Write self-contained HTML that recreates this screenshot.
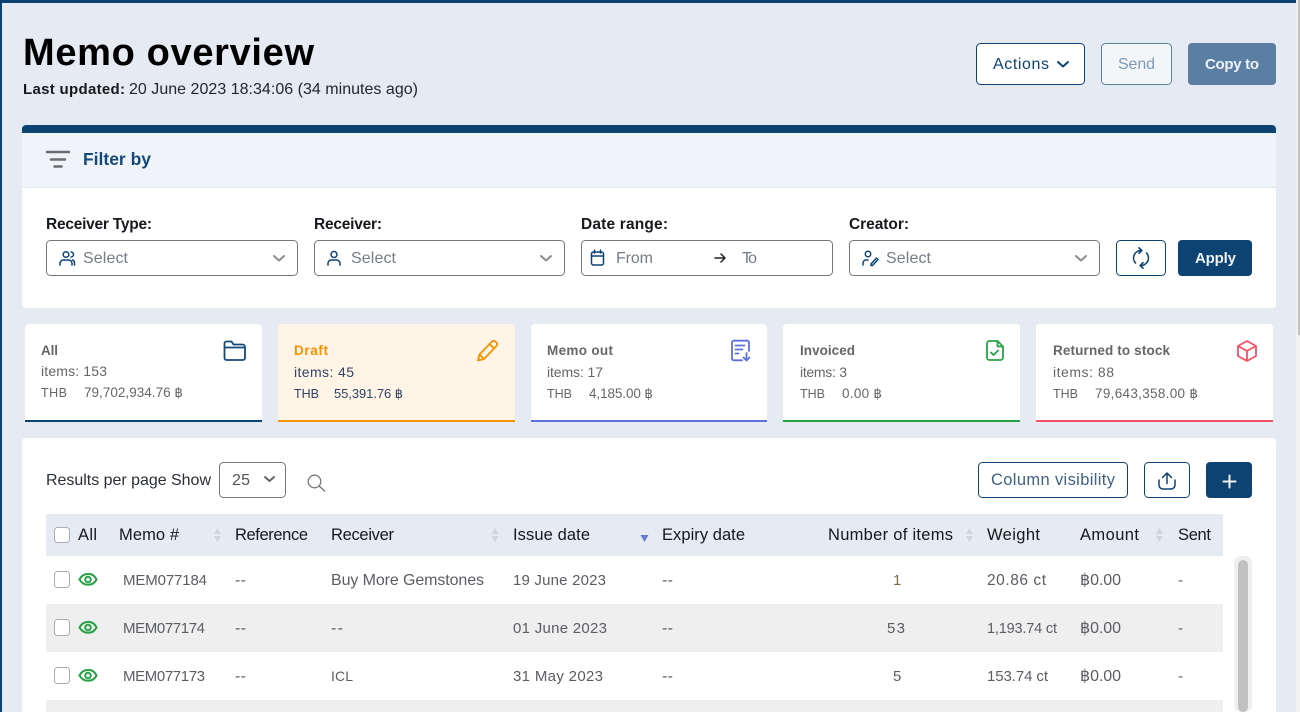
<!DOCTYPE html>
<html lang="en"><head><meta charset="utf-8"><title>Memo overview</title>
<style>
html,body{margin:0;padding:0;width:1300px;height:712px;overflow:hidden;background:#e6ebf3}
svg{display:block}
text{font-family:"Liberation Sans","DejaVu Sans",sans-serif;font-size:16px;fill:#555}
.b{font-weight:700}
.lab{font-size:15.5px;fill:#16191d;font-weight:700}
.sel{font-size:16px;fill:#757c86}
.ct{font-size:13.5px;font-weight:700;fill:#666}
.cs{font-size:14px;fill:#666}
.cv{font-size:13.5px;fill:#666}
.cu{font-size:12.5px;fill:#666}
.cd{font-size:14px;fill:#2f4468}
.h{font-size:16.5px;fill:#15181c}
.r{font-size:15px;fill:#5a5d62}
.r2{font-size:16px;fill:#5a5d62}
.sq{fill:#fff;stroke:#a9adb3;stroke-width:1}
.ic{fill:none;stroke:#0d4373;stroke-width:1.5;stroke-linecap:round;stroke-linejoin:round}
</style></head><body>
<svg width="1300" height="712" viewBox="0 0 1300 712" xmlns="http://www.w3.org/2000/svg">
<rect width="1300" height="712" fill="#e6ebf3"/>
<rect width="1296" height="3" fill="#0d4373"/>
<rect y="0" width="2" height="712" fill="#0d4373"/>
<rect x="1296" width="4" height="712" fill="#f1f1f1"/>
<rect x="1298" width="2" height="335" fill="#c1c1c1"/>

<!-- header -->
<text x="23" y="65" class="b" style="font-size:38px;fill:#000" textLength="291" lengthAdjust="spacing">Memo overview</text>
<text x="23" y="94" class="b" style="font-size:15px;fill:#16191d" textLength="102" lengthAdjust="spacing">Last updated:</text>
<text x="129" y="94" style="font-size:16px;fill:#22262b" textLength="289" lengthAdjust="spacing">20 June 2023 18:34:06 (34 minutes ago)</text>

<rect x="976.5" y="43.5" width="108" height="41" rx="4" fill="#fff" stroke="#0d4373"/>
<text x="993" y="69" style="fill:#0d4373" textLength="56" lengthAdjust="spacing">Actions</text>
<path d="M1058 62l5 4.500 5-4.500" fill="none" stroke="#0d4373" stroke-width="2" stroke-linecap="round" stroke-linejoin="round"/>
<rect x="1101.500" y="43.500" width="70" height="41" rx="4" fill="#f3f6f9" stroke="#5d80a3"/>
<text x="1118" y="69" style="fill:#7f9ab5" textLength="37" lengthAdjust="spacing">Send</text>
<rect x="1188" y="43" width="88" height="42" rx="4" fill="#5b7fa3"/>
<text x="1205" y="69" class="b" style="font-size:15px;fill:#eef2f6" textLength="54" lengthAdjust="spacing">Copy to</text>

<!-- filter panel -->
<rect x="22" y="125" width="1254" height="183" rx="4" fill="#fff"/>
<path d="M22 133v-4a4 4 0 0 1 4-4h1246a4 4 0 0 1 4 4v4z" fill="#0d4373"/>
<rect x="22" y="133" width="1254" height="54" fill="#f0f4f9"/>
<rect x="22" y="187" width="1254" height="1" fill="#e4e9f0"/>
<path d="M47 152h22M51 159.500h14M54.500 166.500h7" stroke="#6a6c6f" stroke-width="2.500" fill="none" stroke-linecap="round"/>
<text x="83" y="165" class="b" style="font-size:17.5px;fill:#15497a" textLength="68" lengthAdjust="spacing">Filter by</text>

<text x="46" y="229" class="lab" textLength="106" lengthAdjust="spacing">Receiver Type:</text>
<text x="314" y="229" class="lab" textLength="68" lengthAdjust="spacing">Receiver:</text>
<text x="581" y="229" class="lab" textLength="87" lengthAdjust="spacing">Date range:</text>
<text x="849" y="229" class="lab" textLength="60" lengthAdjust="spacing">Creator:</text>

<g fill="#fff" stroke="#777">
<rect x="46.500" y="240.500" width="251" height="35" rx="4"/>
<rect x="314.500" y="240.500" width="250" height="35" rx="4"/>
<rect x="581.500" y="240.500" width="251" height="35" rx="4"/>
<rect x="849.500" y="240.500" width="250" height="35" rx="4"/>
</g>
<text x="83" y="263" class="sel" textLength="45" lengthAdjust="spacing">Select</text>
<text x="351" y="263" class="sel" textLength="45" lengthAdjust="spacing">Select</text>
<text x="616" y="263" class="sel" textLength="37" lengthAdjust="spacing">From</text>
<text x="742" y="263" class="sel" textLength="15" lengthAdjust="spacing">To</text>
<text x="886" y="263" class="sel" textLength="45" lengthAdjust="spacing">Select</text>
<g fill="none" stroke="#8a8d91" stroke-width="2" stroke-linecap="round" stroke-linejoin="round">
<path d="M274 256l5 4.500 5-4.500M541 256l5 4.500 5-4.500M1076 256l5 4.500 5-4.500"/>
</g>
<!-- users icon -->
<g class="ic"><circle cx="66" cy="254.500" r="2.800"/><path d="M60 265v-1.500a3.500 3.500 0 0 1 3.500-3.500h5a3.500 3.500 0 0 1 3.500 3.500v1.500M71 252a2.500 2.500 0 0 1 0 5M72.500 260a3 3 0 0 1 2 3v2"/></g>
<!-- user icon -->
<g class="ic"><circle cx="334" cy="254.500" r="3"/><path d="M328 265v-1.500a3.500 3.500 0 0 1 3.500-3.500h5a3.500 3.500 0 0 1 3.500 3.500v1.500"/></g>
<!-- calendar -->
<g class="ic"><rect x="591.500" y="252" width="12" height="13" rx="2"/><path d="M591.500 256h12M594.500 250v3M600.500 250v3"/></g>
<path d="M715 258h10M721 254l4 4-4 4" fill="none" stroke="#222" stroke-width="1.500" stroke-linecap="round" stroke-linejoin="round"/>
<!-- creator -->
<g class="ic"><circle cx="868" cy="254" r="2.700"/><path d="M863 265v-2a3 3 0 0 1 3-3h2M871 264l5.500-6 1.500 1.500-5.500 6h-1.500z"/></g>

<rect x="1116.500" y="240.500" width="49" height="35" rx="4" fill="#fff" stroke="#0d4373"/>
<g fill="none" stroke="#0d4373" stroke-width="1.600" stroke-linecap="round" stroke-linejoin="round"><path d="M1141.500 250.500A7.500 7.500 0 0 0 1135.500 263M1139 247.800l2.800 2.700-2.800 2.800M1140.500 265.500A7.500 7.500 0 0 0 1146.500 253M1143 262.700l-2.800 2.800 2.800 2.700"/></g>
<rect x="1178" y="240" width="74" height="36" rx="4" fill="#0d4373"/>
<text x="1195" y="263" class="b" style="fill:#eef2f6;font-size:15px" textLength="41" lengthAdjust="spacing">Apply</text>

<!-- cards -->
<path d="M25 422v-94a4 4 0 0 1 4-4h229a4 4 0 0 1 4 4v94z" fill="#fff"/><rect x="25" y="420" width="237" height="2" fill="#0d4373"/>
<path d="M278 422v-94a4 4 0 0 1 4-4h229a4 4 0 0 1 4 4v94z" fill="#fff4e6"/><rect x="278" y="420" width="237" height="2" fill="#f59300"/>
<path d="M531 422v-94a4 4 0 0 1 4-4h228a4 4 0 0 1 4 4v94z" fill="#fff"/><rect x="531" y="420" width="236" height="2" fill="#5f6fe0"/>
<path d="M783 422v-94a4 4 0 0 1 4-4h229a4 4 0 0 1 4 4v94z" fill="#fff"/><rect x="783" y="420" width="237" height="2" fill="#27a245"/>
<path d="M1036 422v-94a4 4 0 0 1 4-4h229a4 4 0 0 1 4 4v94z" fill="#fff"/><rect x="1036" y="420" width="237" height="2" fill="#fb4f64"/>

<text x="41" y="355" class="ct" textLength="17" lengthAdjust="spacing">All</text>
<text x="41" y="376" class="cs" textLength="66" lengthAdjust="spacing">items: 153</text>
<text x="41" y="397" class="cu" textLength="26" lengthAdjust="spacing">THB</text>
<text x="84" y="397" class="cv" textLength="99" lengthAdjust="spacing">79,702,934.76 ฿</text>

<text x="294" y="355" class="ct" style="fill:#f59300" textLength="34" lengthAdjust="spacing">Draft</text>
<text x="294" y="377" class="cd" textLength="60" lengthAdjust="spacing">items: 45</text>
<text x="294" y="398" class="cu" style="fill:#2f4468" textLength="25" lengthAdjust="spacing">THB</text>
<text x="334" y="398" class="cv" style="font-size:13px;fill:#2f4468" textLength="69" lengthAdjust="spacing">55,391.76 ฿</text>

<text x="547" y="355" class="ct" textLength="66" lengthAdjust="spacing">Memo out</text>
<text x="547" y="377" class="cs" textLength="56" lengthAdjust="spacing">items: 17</text>
<text x="547" y="398" class="cu" textLength="25" lengthAdjust="spacing">THB</text>
<text x="589" y="398" class="cv" textLength="64" lengthAdjust="spacing">4,185.00 ฿</text>

<text x="800" y="355" class="ct" textLength="55" lengthAdjust="spacing">Invoiced</text>
<text x="800" y="377" class="cs" textLength="47" lengthAdjust="spacing">items: 3</text>
<text x="800" y="398" class="cu" textLength="25" lengthAdjust="spacing">THB</text>
<text x="842" y="398" class="cv" textLength="40" lengthAdjust="spacing">0.00 ฿</text>

<text x="1053" y="355" class="ct" textLength="117" lengthAdjust="spacing">Returned to stock</text>
<text x="1053" y="377" class="cs" textLength="61" lengthAdjust="spacing">items: 88</text>
<text x="1053" y="398" class="cu" textLength="25" lengthAdjust="spacing">THB</text>
<text x="1095" y="398" class="cv" textLength="103" lengthAdjust="spacing">79,643,358.00 ฿</text>

<!-- card icons -->
<path d="M224.500 343.500a2 2 0 0 1 2-2h5l2 3h9a2.500 2.500 0 0 1 2.500 2.500v11a2 2 0 0 1-2 2h-16.500a2 2 0 0 1-2-2zM224.500 347.500h20" fill="none" stroke="#15497a" stroke-width="1.800" stroke-linejoin="round"/>
<path d="M478 360.500l1.500-6 12-12.500c1.500-1.500 3-1.500 4.500 0s1.500 3 0 4.500l-12 12.500zM479.500 354.500l4.500 4.500M489.500 344l5 5" fill="none" stroke="#f59300" stroke-width="1.800" stroke-linejoin="round"/>
<g fill="none" stroke="#5f6fe0" stroke-width="1.800" stroke-linecap="round" stroke-linejoin="round"><path d="M749 351v-8.500a1.800 1.800 0 0 0-1.800-1.800h-13.400a1.800 1.800 0 0 0-1.800 1.800v16a1.800 1.800 0 0 0 1.800 1.800h8.200"/><path d="M735.500 345.500h9M735.500 349.500h7M735.500 353.500h3M746.500 353v7M743.500 357.500l3 3 3-3"/></g>
<g fill="none" stroke="#27a245" stroke-width="1.800" stroke-linecap="round" stroke-linejoin="round"><path d="M997.500 341h-8a2.500 2.500 0 0 0-2.500 2.500v14a2.500 2.500 0 0 0 2.500 2.500h11a2.500 2.500 0 0 0 2.500-2.500v-11z"/><path d="M997.500 341v5.500h5.500M991 352.500l2.500 2.500 4.500-4.500"/></g>
<g fill="none" stroke="#fb4f64" stroke-width="1.800" stroke-linejoin="round"><path d="M1247 341l9 5v10l-9 5-9-5v-10zM1238 346l9 5 9-5M1247 351v10"/></g>

<!-- table panel -->
<rect x="22" y="438" width="1254" height="290" rx="4" fill="#fff"/>
<text x="46" y="485" style="fill:#2a2f36" textLength="165" lengthAdjust="spacing">Results per page Show</text>
<rect x="219.500" y="462.500" width="66" height="35" rx="4" fill="#fff" stroke="#777"/>
<text x="232" y="485" textLength="18" lengthAdjust="spacing">25</text>
<path d="M265 477l4.500 4 4.500-4" fill="none" stroke="#666" stroke-width="2" stroke-linecap="round" stroke-linejoin="round"/>
<circle cx="314.500" cy="481.500" r="6.300" fill="none" stroke="#777" stroke-width="1.300"/><path d="M319.200 486l5.300 5" stroke="#777" stroke-width="1.400" stroke-linecap="round"/>

<rect x="978.500" y="462.500" width="149" height="35" rx="4" fill="#fff" stroke="#0d4373"/>
<text x="991" y="485" style="font-size:16.5px;fill:#3f6184" textLength="124" lengthAdjust="spacing">Column visibility</text>
<rect x="1144.500" y="462.500" width="45" height="35" rx="4" fill="#fff" stroke="#0d4373"/>
<path d="M1167 483.500v-10M1162.500 477.500l4.500-4.500 4.500 4.500M1159 480v5a4 4 0 0 0 4 4h8a4 4 0 0 0 4-4v-5" class="ic"/>
<rect x="1206" y="462" width="46" height="36" rx="4" fill="#0d4373"/>
<path d="M1229.500 475.500v12M1223.500 481.500h12" stroke="#eef2f6" stroke-width="2" stroke-linecap="round"/>

<!-- table -->
<rect x="46" y="514" width="1177" height="42" fill="#e6ebf3"/>
<rect x="46" y="604" width="1177" height="48" fill="#efefef"/>
<rect x="46" y="700" width="1177" height="12" fill="#efefef"/>
<rect x="1234" y="556" width="18" height="156" rx="7" fill="#efefef"/>
<rect x="1238" y="560" width="10" height="152" rx="5" fill="#c1c1c1"/>

<text x="78" y="540" class="h" textLength="19" lengthAdjust="spacing">All</text>
<text x="119" y="540" class="h" textLength="60" lengthAdjust="spacing">Memo #</text>
<text x="235" y="540" class="h" textLength="73" lengthAdjust="spacing">Reference</text>
<text x="331" y="540" class="h" textLength="63" lengthAdjust="spacing">Receiver</text>
<text x="513" y="540" class="h" textLength="77" lengthAdjust="spacing">Issue date</text>
<text x="662" y="540" class="h" textLength="83" lengthAdjust="spacing">Expiry date</text>
<text x="828" y="540" class="h" textLength="125" lengthAdjust="spacing">Number of items</text>
<text x="987" y="540" class="h" textLength="53" lengthAdjust="spacing">Weight</text>
<text x="1080" y="540" class="h" textLength="59" lengthAdjust="spacing">Amount</text>
<text x="1178" y="540" class="h" textLength="33" lengthAdjust="spacing">Sent</text>
<g fill="#d0d5d6">
<path d="M217.500 528l3.500 6h-7zM217.500 542l3.500-6h-7zM495 528l3.500 6h-7zM495 542l3.500-6h-7zM969.500 528l3.500 6h-7zM969.500 542l3.500-6h-7zM1159.500 528l3.500 6h-7zM1159.500 542l3.500-6h-7z"/>
</g>
<path d="M640.500 535h8l-4 7z" fill="#6b78d0"/>

<rect x="54.500" y="527.500" width="15" height="15" rx="3" class="sq"/>
<rect x="54.500" y="571.500" width="15" height="16" rx="3" class="sq"/>
<rect x="54.500" y="619.500" width="15" height="16" rx="3" class="sq"/>
<rect x="54.500" y="667.500" width="15" height="16" rx="3" class="sq"/>
<g fill="none" stroke="#27a245" stroke-width="2">
<path d="M79.500 579.500c4-7.500 13.500-7.500 17 0c-3.500 7-13 7-17 0z"/><circle cx="88" cy="579.500" r="2.800"/>
<path d="M79.500 627.500c4-7.500 13.500-7.500 17 0c-3.500 7-13 7-17 0z"/><circle cx="88" cy="627.500" r="2.800"/>
<path d="M79.500 675.500c4-7.500 13.500-7.500 17 0c-3.500 7-13 7-17 0z"/><circle cx="88" cy="675.500" r="2.800"/>
</g>

<text x="123" y="585" class="r" textLength="84" lengthAdjust="spacing">MEM077184</text>
<text x="235" y="585" class="r2" textLength="11" lengthAdjust="spacing">--</text>
<text x="331" y="585" class="r2" textLength="153" lengthAdjust="spacing">Buy More Gemstones</text>
<text x="513" y="585" class="r" textLength="93" lengthAdjust="spacing">19 June 2023</text>
<text x="662" y="585" class="r2" textLength="11" lengthAdjust="spacing">--</text>
<text x="893" y="585" class="r" style="fill:#7a6a50">1</text>
<text x="987" y="585" class="r" style="font-size:15.500px" textLength="59" lengthAdjust="spacing">20.86 ct</text>
<text x="1080" y="585" class="r2" textLength="41" lengthAdjust="spacing">฿0.00</text>
<text x="1178" y="585" class="r">-</text>

<text x="123" y="633" class="r" textLength="82" lengthAdjust="spacing">MEM077174</text>
<text x="235" y="633" class="r2" textLength="11" lengthAdjust="spacing">--</text>
<text x="331" y="633" class="r2" textLength="12" lengthAdjust="spacing">--</text>
<text x="513" y="633" class="r" textLength="94" lengthAdjust="spacing">01 June 2023</text>
<text x="662" y="633" class="r2" textLength="11" lengthAdjust="spacing">--</text>
<text x="887" y="633" class="r" textLength="18" lengthAdjust="spacing">53</text>
<text x="987" y="633" class="r" style="font-size:14.500px" textLength="70" lengthAdjust="spacing">1,193.74 ct</text>
<text x="1080" y="633" class="r2" textLength="41" lengthAdjust="spacing">฿0.00</text>
<text x="1178" y="633" class="r">-</text>

<text x="123" y="681" class="r" textLength="82" lengthAdjust="spacing">MEM077173</text>
<text x="235" y="681" class="r2" textLength="11" lengthAdjust="spacing">--</text>
<text x="331" y="681" class="r" style="font-size:14px" textLength="22" lengthAdjust="spacing">ICL</text>
<text x="513" y="681" class="r" textLength="90" lengthAdjust="spacing">31 May 2023</text>
<text x="662" y="681" class="r2" textLength="11" lengthAdjust="spacing">--</text>
<text x="893" y="681" class="r">5</text>
<text x="987" y="681" class="r" textLength="61" lengthAdjust="spacing">153.74 ct</text>
<text x="1080" y="681" class="r2" textLength="41" lengthAdjust="spacing">฿0.00</text>
<text x="1178" y="681" class="r">-</text>
</svg>
</body></html>
